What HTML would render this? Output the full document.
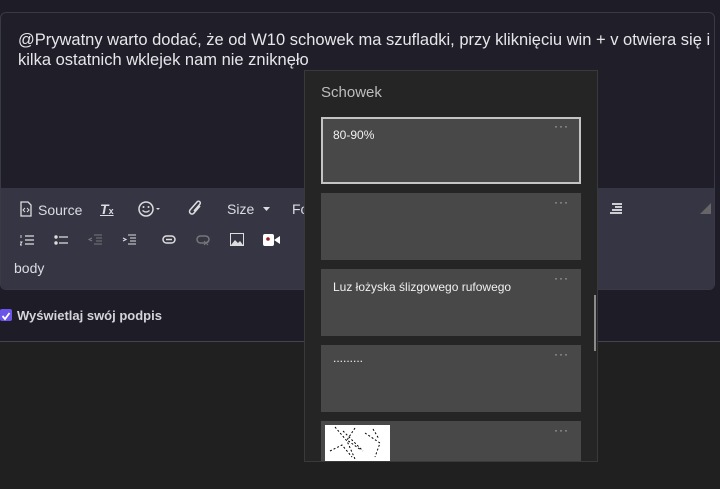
<!DOCTYPE html>
<html><head><meta charset="utf-8"><style>
body{margin:0;width:720px;height:489px;background:#202021;font-family:"Liberation Sans",sans-serif;position:relative;overflow:hidden}
.top{position:absolute;left:0;top:0;width:720px;height:342px;background:#1e1d27}
.frame{position:absolute;left:0;top:12px;width:713px;height:276px;border:1px solid #3a3946;border-radius:6px;background:#1f1e29;overflow:hidden}
.txt{position:absolute;left:17px;top:17px;font-size:16.5px;line-height:20px;color:#e6e6ea;width:700px}
.tb{position:absolute;left:0;top:175px;width:713px;height:101px;background:#363544}
.t{position:absolute;color:#dcdce2;font-size:14px}
.ic{position:absolute}
.line{position:absolute;left:0;top:341px;width:720px;height:1px;background:#44434f}
.chk{position:absolute;left:0;top:309px;width:12px;height:12px;background:#6a55e8;border-radius:2px}
.pop{position:absolute;left:304px;top:70px;width:292px;height:390px;background:#252526;border:1px solid #3a3a3c}
.it{position:absolute;left:16px;width:260px;height:67px;background:#484849}
.it .d{position:absolute;right:12px;top:2px;color:#bbb;font-size:12px;letter-spacing:1px}
.it .s{position:absolute;left:12px;top:11px;color:#f0f0f0;font-size:12px}
</style></head><body>
<div class="top"></div>
<div class="frame">
<div class="txt">@Prywatny warto dodać, że od W10 schowek ma szufladki, przy kliknięciu win + v otwiera się i kilka ostatnich wklejek nam nie zniknęło</div>
<div class="tb">
<svg class="ic" style="left:19px;top:13px" width="12" height="16" viewBox="0 0 12 16"><path d="M1 1h7l3 3v11H1z" fill="none" stroke="#ddd" stroke-width="1.3"/><path d="M5 7l-2 2 2 2M7 7l2 2-2 2" fill="none" stroke="#ddd"/></svg>
<div class="t" style="left:37px;top:14px">Source</div>
<div class="t" style="left:99px;top:13px;font-weight:bold;font-style:italic;text-decoration:underline">T<span style="font-size:9px;font-style:normal">x</span></div>
<svg class="ic" style="left:137px;top:12px" width="24" height="18" viewBox="0 0 24 18"><circle cx="8" cy="9" r="7" fill="none" stroke="#ddd" stroke-width="1.5"/><circle cx="5.5" cy="7" r="1" fill="#ddd"/><circle cx="10.5" cy="7" r="1" fill="#ddd"/><path d="M4.5 10.5q3.5 3 7 0" fill="none" stroke="#ddd" stroke-width="1.3"/><path d="M18 8l2 2 2-2z" fill="#ddd"/></svg>
<svg class="ic" style="left:186px;top:12px" width="16" height="18" viewBox="0 0 16 18"><path d="M13 6l-6 7a2.5 2.5 0 01-4-3l7-8a1.7 1.7 0 013 2l-6 7" fill="none" stroke="#ddd" stroke-width="1.5"/></svg>
<div class="t" style="left:226px;top:13px">Size</div>
<svg class="ic" style="left:262px;top:19px" width="8" height="5"><path d="M0 0h7l-3.5 4z" fill="#ddd"/></svg>
<div class="t" style="left:291px;top:13px">Fo</div>
<svg class="ic" style="left:609px;top:15px" width="14" height="12"><path d="M2 1h10M5 4h7M2 7h10M0 10h12" stroke="#fff" stroke-width="1.5"/></svg>
<svg class="ic" style="left:699px;top:15px" width="11" height="11"><path d="M11 0v11H0z" fill="#666"/></svg>
<svg class="ic" style="left:19px;top:46px" width="14" height="12"><path d="M5 2h9M5 6h9M5 10h9" stroke="#ddd" stroke-width="1.3"/><path d="M1 1v3M0 8h2l-2 3h2" stroke="#ddd" stroke-width="0.9" fill="none"/></svg>
<svg class="ic" style="left:53px;top:46px" width="14" height="12"><circle cx="2" cy="3" r="1.7" fill="#ddd"/><circle cx="2" cy="9" r="1.7" fill="#ddd"/><path d="M5 3h9M5 9h9" stroke="#ddd" stroke-width="1.3"/></svg>
<svg class="ic" style="left:87px;top:46px" width="14" height="12"><path d="M6 1h8M8 4h6M8 7h6M6 10h8M4 4L1 5.5 4 7" stroke="#777" stroke-width="1.1" fill="none"/></svg>
<svg class="ic" style="left:121px;top:46px" width="14" height="12"><path d="M6 1h8M8 4h6M8 7h6M6 10h8M1 4l3 1.5L1 7" stroke="#ddd" stroke-width="1.1" fill="none"/></svg>
<svg class="ic" style="left:161px;top:47px" width="14" height="9"><rect x="1" y="1" width="12" height="7" rx="3.5" fill="none" stroke="#ddd" stroke-width="1.5"/><path d="M4 4.5h6" stroke="#ddd" stroke-width="1.5"/></svg>
<svg class="ic" style="left:195px;top:47px" width="14" height="11"><rect x="1" y="1" width="12" height="7" rx="3.5" fill="none" stroke="#777" stroke-width="1.5"/><path d="M8 6l4 4M12 6l-4 4" stroke="#777"/></svg>
<svg class="ic" style="left:229px;top:45px" width="14" height="13"><rect x="0.5" y="0.5" width="13" height="12" fill="none" stroke="#ddd"/><path d="M1 12l4-5 3 3 2-2 3 4z" fill="#ddd"/></svg>
<svg class="ic" style="left:262px;top:46px" width="17" height="12"><rect x="0" y="0" width="11" height="12" rx="2" fill="#fff"/><path d="M11 6l6-4v8z" fill="#fff"/><circle cx="5" cy="5" r="1.8" fill="#9b1c1c"/></svg>
<div class="t" style="left:13px;top:72px">body</div>
</div>
</div>
<div class="chk"><svg width="12" height="12"><path d="M2.5 6l2.5 3 4.5-6" stroke="#fff" stroke-width="1.8" fill="none"/></svg></div>
<div class="t" style="left:17px;top:308px;font-weight:bold;color:#d4d4da;font-size:13px">Wyświetlaj swój podpis</div>
<div class="line"></div>
<div class="pop">
<div style="position:absolute;left:16px;top:13px;color:#bdbdbd;font-size:15px">Schowek</div>
<div class="it" style="top:46px;box-sizing:border-box;border:2px solid #c4c4c4"><div class="s" style="left:10px;top:9px">80-90%</div><div class="d" style="right:10px;top:0">···</div></div>
<div class="it" style="top:122px"><div class="d">···</div></div>
<div class="it" style="top:198px"><div class="s">Luz łożyska ślizgowego rufowego</div><div class="d">···</div></div>
<div class="it" style="top:274px"><div class="s" style="top:6px">.........</div><div class="d">···</div></div>
<div class="it" style="top:350px;height:40px"><div style="position:absolute;left:4px;top:4px;width:65px;height:36px;background:#fff"><svg width="65" height="36"><path d="M10 2l12 14 8 18M18 6l20 20M30 3l-8 12 14 10M40 8l15 10-5 14M48 4l6 10M5 26l12-6 10 12" stroke="#000" stroke-width="1" stroke-dasharray="2 2" fill="none"/></svg></div><div class="d">···</div></div>
<div style="position:absolute;left:289px;top:224px;width:2px;height:56px;background:#8a8a8a"></div>
</div>
</body></html>
